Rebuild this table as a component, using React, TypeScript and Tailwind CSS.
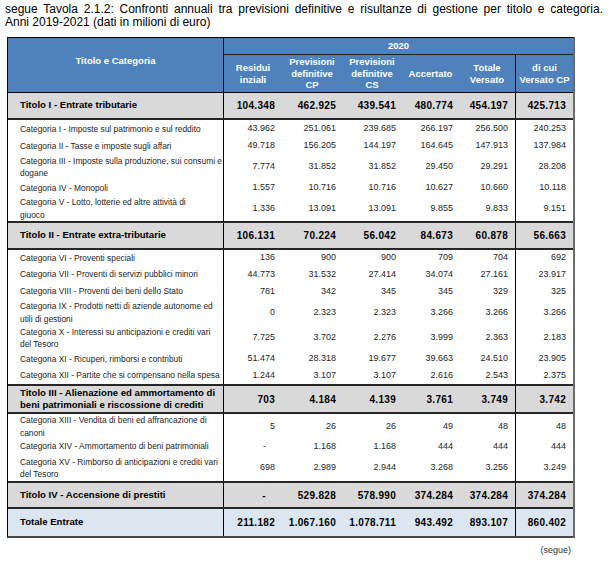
import React from "react";

const COLS = "grid grid-cols-[216px_58px_60px_60px_57px_57px_57px]";
const PADS = ["pr-[7px]", "pr-[6px]", "pr-[6px]", "pr-[6px]", "pr-[7px]", "pr-[7px]"];

type Cat = { lines: string[]; vals: string[]; h: string };
type Section = { title: string[]; vals: string[]; h: string; top: boolean; cats: Cat[] };

const sections: Section[] = [
  {
    title: ["Titolo I - Entrate tributarie"],
    vals: ["104.348", "462.925", "439.541", "480.774", "454.197", "425.713"],
    h: "h-[27px]",
    top: false,
    cats: [
      { lines: ["Categoria I - Imposte sul patrimonio e sul reddito"], vals: ["43.962", "251.061", "239.685", "266.197", "256.500", "240.253"], h: "h-[18px]" },
      { lines: ["Categoria II - Tasse e imposte sugli affari"], vals: ["49.718", "156.205", "144.197", "164.645", "147.913", "137.984"], h: "h-[16px]" },
      { lines: ["Categoria III - Imposte sulla produzione, sui consumi e", "dogane"], vals: ["7.774", "31.852", "31.852", "29.450", "29.291", "28.208"], h: "h-[26px]" },
      { lines: ["Categoria IV - Monopoli"], vals: ["1.557", "10.716", "10.716", "10.627", "10.660", "10.118"], h: "h-[16px]" },
      { lines: ["Categoria V - Lotto, lotterie ed altre attività di", "giuoco"], vals: ["1.336", "13.091", "13.091", "9.855", "9.833", "9.151"], h: "h-[25px]" },
    ],
  },
  {
    title: ["Titolo II - Entrate extra-tributarie"],
    vals: ["106.131", "70.224", "56.042", "84.673", "60.878", "56.663"],
    h: "h-[29px]",
    top: true,
    cats: [
      { lines: ["Categoria VI - Proventi speciali"], vals: ["136", "900", "900", "709", "704", "692"], h: "h-[16px]" },
      { lines: ["Categoria VII - Proventi di servizi pubblici minori"], vals: ["44.773", "31.532", "27.414", "34.074", "27.161", "23.917"], h: "h-[17px]" },
      { lines: ["Categoria VIII - Proventi dei beni dello Stato"], vals: ["781", "342", "345", "345", "329", "325"], h: "h-[17px]" },
      { lines: ["Categoria IX - Prodotti netti di aziende autonome ed", "utili di gestioni"], vals: ["0", "2.323", "2.323", "3.266", "3.266", "3.266"], h: "h-[25px]" },
      { lines: ["Categoria X - Interessi su anticipazioni e crediti vari", "del Tesoro"], vals: ["7.725", "3.702", "2.276", "3.999", "2.363", "2.183"], h: "h-[26px]" },
      { lines: ["Categoria XI - Ricuperi, rimborsi e contributi"], vals: ["51.474", "28.318", "19.677", "39.663", "24.510", "23.905"], h: "h-[16px]" },
      { lines: ["Categoria XII - Partite che si compensano nella spesa"], vals: ["1.244", "3.107", "3.107", "2.616", "2.543", "2.375"], h: "h-[17px]" },
    ],
  },
  {
    title: ["Titolo III - Alienazione ed ammortamento di", "beni patrimoniali e riscossione di crediti"],
    vals: ["703", "4.184", "4.139", "3.761", "3.749", "3.742"],
    h: "h-[30px]",
    top: true,
    cats: [
      { lines: ["Categoria XIII - Vendita di beni ed affrancazione di", "canoni"], vals: ["5", "26", "26", "49", "48", "48"], h: "h-[24px]" },
      { lines: ["Categoria XIV - Ammortamento di beni patrimoniali"], vals: ["-", "1.168", "1.168", "444", "444", "444"], h: "h-[17px]" },
      { lines: ["Categoria XV - Rimborso di anticipazioni e crediti vari", "del Tesoro"], vals: ["698", "2.989", "2.944", "3.268", "3.256", "3.249"], h: "h-[26px]" },
    ],
  },
  {
    title: ["Titolo IV - Accensione di prestiti"],
    vals: ["-", "529.828", "578.990", "374.284", "374.284", "374.284"],
    h: "h-[28px]",
    top: true,
    cats: [],
  },
];

function NumCells({ vals, bold }: { vals: string[]; bold: boolean }) {
  return (
    <>
      {vals.map((v, i) => (
        <div
          key={i}
          className={`flex items-center justify-end ${v === "-" && i === 0 ? "pr-[16px]" : PADS[i]} ${
            i === 4 ? "border-r border-black" : ""
          } ${bold ? "font-bold text-[10px] tracking-[0.3px] text-black" : "text-[9px] text-[#262626]"}`}
        >
          {v}
        </div>
      ))}
    </>
  );
}

function TitleRow({ s }: { s: Section }) {
  return (
    <div
      className={`${COLS} ${s.h} bg-[#d9d9d9] border-b-2 border-[#262626] ${s.top ? "border-t-2" : ""}`}
    >
      <div className="flex flex-col justify-center pl-[12px] border-r border-black font-bold text-[9.6px] leading-[12.5px] text-black whitespace-nowrap">
        {s.title.map((t, i) => (
          <div key={i}>{t}</div>
        ))}
      </div>
      <NumCells vals={s.vals} bold />
    </div>
  );
}

function CatRow({ c }: { c: Cat }) {
  return (
    <div className={`${COLS} ${c.h} bg-white`}>
      <div className="flex flex-col justify-center pl-[12px] border-r border-black text-[8.4px] leading-[12.5px] text-[#262626] whitespace-nowrap">
        {c.lines.map((t, i) => (
          <div key={i}>{t}</div>
        ))}
      </div>
      <NumCells vals={c.vals} bold={false} />
    </div>
  );
}

export default function App() {
  return (
    <div className="w-[611px] h-[563px] bg-white font-['Liberation_Sans',Arial,sans-serif] text-black">
      <div className="px-[5px] pt-[3px] text-[12px] leading-[12.5px] text-black w-[608px]">
        <div className="whitespace-nowrap [text-align-last:justify] text-justify">
          segue Tavola 2.1.2: Confronti annuali tra previsioni definitive e risultanze di gestione per titolo e categoria.
        </div>
        <div>Anni 2019-2021 (dati in milioni di euro)</div>
      </div>

      <div className="ml-[7px] mt-[9px] w-[568px] border-l border-t border-black border-r-2 border-b-2 border-r-[#6b6b6b] border-b-[#4a4a4a]">
        {/* Header */}
        <div className={`${COLS} grid-rows-[17px_37px] h-[55px] bg-[#4f81bd] text-white font-bold border-b border-black`}>
          <div className="row-span-2 flex items-center justify-center pb-[8px] border-r border-black text-[9.5px]">
            Titolo e Categoria
          </div>
          <div className="col-span-6 flex items-center justify-center border-b border-[#1f1f1f] text-[9.5px]">
            2020
          </div>
          <div className="flex items-center justify-center text-center text-[9.5px] leading-[11.7px]">
            Residui
            <br />
            inziali
          </div>
          <div className="flex items-center justify-center text-center text-[9.5px] leading-[11.7px]">
            Previsioni
            <br />
            definitive
            <br />
            CP
          </div>
          <div className="flex items-center justify-center text-center text-[9.5px] leading-[11.7px]">
            Previsioni
            <br />
            definitive
            <br />
            CS
          </div>
          <div className="flex items-center justify-center text-center text-[9.5px] leading-[11.7px]">
            Accertato
          </div>
          <div className="flex items-center justify-center text-center text-[9.5px] leading-[11.7px] border-r border-black">
            Totale
            <br />
            Versato
          </div>
          <div className="flex items-center justify-center text-center text-[9.5px] leading-[11.7px]">
            di cui
            <br />
            Versato CP
          </div>
        </div>

        {sections.map((s, i) => (
          <React.Fragment key={i}>
            <TitleRow s={s} />
            {s.cats.map((c, j) => (
              <CatRow key={j} c={c} />
            ))}
          </React.Fragment>
        ))}

        {/* Totale */}
        <div className={`${COLS} h-[27px] bg-[#dce6f1]`}>
          <div className="flex items-center pl-[12px] border-r border-black font-bold text-[9.6px] text-black">
            Totale Entrate
          </div>
          <NumCells vals={["211.182", "1.067.160", "1.078.711", "943.492", "893.107", "860.402"]} bold />
        </div>
      </div>

      <div className="w-[571px] mt-[6px] text-right text-[9px] text-[#333]">(segue)</div>
    </div>
  );
}
